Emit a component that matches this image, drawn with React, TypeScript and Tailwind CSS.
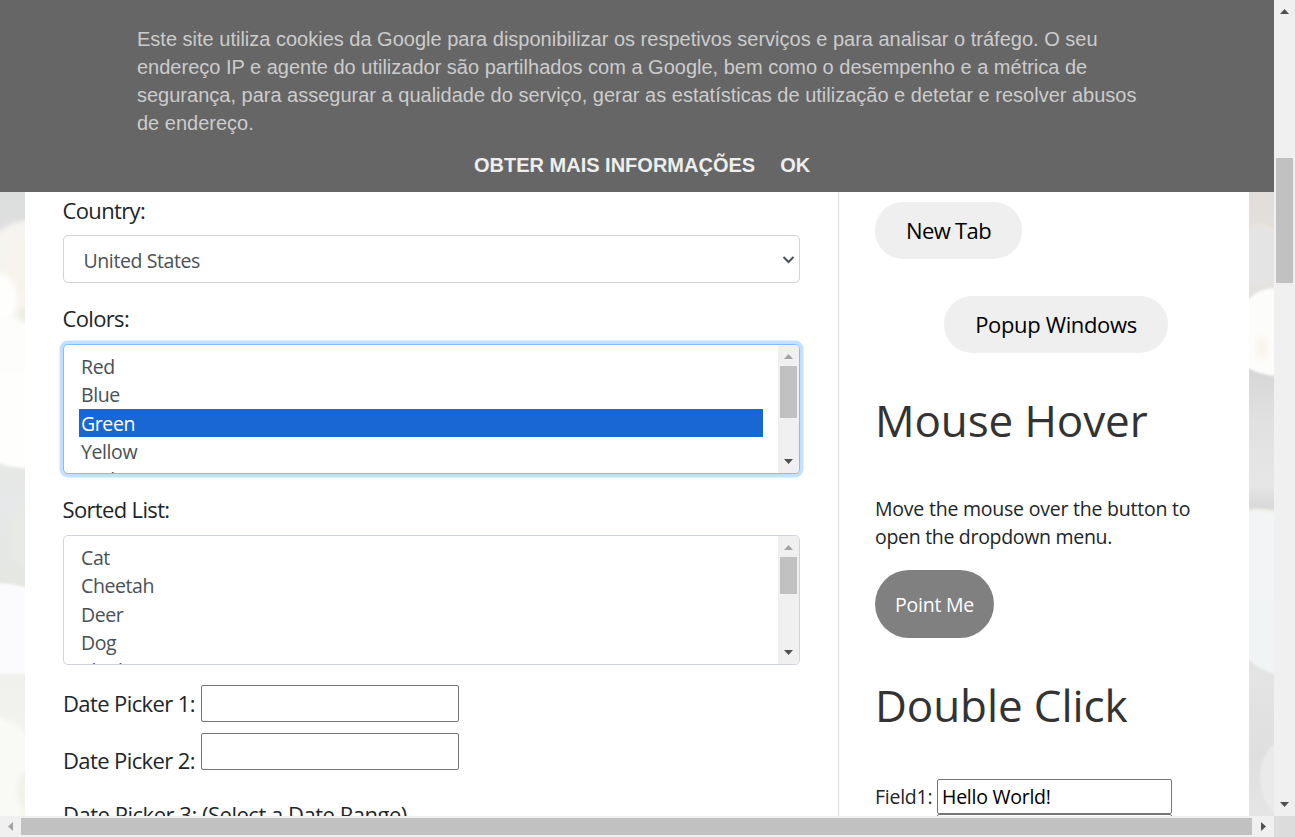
import React from "react";

type Dir = "up" | "down" | "left" | "right";

const arrowPaths: Record<Dir, string> = {
  up: "M0 8 L4.5 3 L9 8 Z",
  down: "M0 1 L9 1 L4.5 6 Z",
  left: "M7 0 L7 9 L2 4.5 Z",
  right: "M2 0 L7 4.5 L2 9 Z",
};

function Arrow({ dir, muted = false }: { dir: Dir; muted?: boolean }) {
  return (
    <span className="flex h-[21px] w-[21px] shrink-0 items-center justify-center">
      <svg width="9" height="9" viewBox="0 0 9 9" fill={muted ? "#a3a3a3" : "#505050"}>
        <path d={arrowPaths[dir]} />
      </svg>
    </span>
  );
}

function ListBox({
  options,
  selected,
  thumb,
  focused = false,
}: {
  options: string[];
  selected?: number;
  thumb: string;
  focused?: boolean;
}) {
  return (
    <div
      className={
        "flex h-[130px] w-[737px] shrink-0 overflow-hidden rounded-[5px] border bg-white " +
        (focused ? "border-[#80bdff] shadow-[0_0_0_3.5px_#c5dfff]" : "border-[#ced4da]")
      }
    >
      <ul className="flex-1 pt-[7px] pr-[15px] pl-[15px] text-[19.5px] leading-[30px] tracking-[-0.4px] text-[#495057]">
        {options.map((o, i) => (
          <li
            key={i}
            className={"h-[28.3px] pl-[2px] " + (i === selected ? "bg-[#1967d2] text-white" : "")}
          >
            {o}
          </li>
        ))}
      </ul>
      <div className="flex w-[21px] flex-col items-center justify-between bg-[#f0f0f0]">
        <div className="flex flex-col items-center">
          <Arrow dir="up" muted />
          <div className={"w-[17px] bg-[#c1c1c1] " + thumb} />
        </div>
        <Arrow dir="down" />
      </div>
    </div>
  );
}

function LeftBackdrop() {
  return (
    <svg className="h-full w-[25px] shrink-0" viewBox="0 0 25 624" preserveAspectRatio="none">
      <defs>
        <filter id="softL" x="-50%" y="-10%" width="200%" height="120%">
          <feGaussianBlur stdDeviation="2.5" />
        </filter>
        <filter id="edgeL" x="-50%" y="-10%" width="200%" height="120%">
          <feGaussianBlur stdDeviation="1.2" />
        </filter>
        <linearGradient id="baseL" x1="0" y1="0" x2="0" y2="1">
          <stop offset="0" stopColor="#dcdddd" />
          <stop offset="0.44" stopColor="#e6e8e5" />
          <stop offset="0.5" stopColor="#e7e8e9" />
          <stop offset="0.62" stopColor="#e4e7e2" />
          <stop offset="0.77" stopColor="#f0f1ed" />
          <stop offset="1" stopColor="#f5f6ef" />
        </linearGradient>
      </defs>
      <rect width="25" height="624" fill="url(#baseL)" />
      <g filter="url(#softL)">
        <ellipse cx="30" cy="110" rx="60" ry="82" fill="#f6f4ef" />
        <ellipse cx="27" cy="84" rx="24" ry="42" fill="#f9f3ed" />
        <ellipse cx="-2" cy="107" rx="19" ry="26" fill="#fefefd" />
        <path d="M-9 128 Q12 122 34 132 V274 Q12 276 -9 268 Z" fill="#fdfefc" />
        <ellipse cx="26" cy="123" rx="8" ry="8" fill="#eceee1" />
        <ellipse cx="30" cy="345" rx="20" ry="34" fill="#e7eae5" />
      </g>
      <g filter="url(#edgeL)">
        <path d="M-5 180 H30 V276 Q8 275 -5 268 Z" fill="#fefefd" />
        <path d="M-5 391 Q16 391 30 397 V482 H-5 Z" fill="#fbfbfd" />
      </g>
      <path d="M-9 524 Q18 528 30 548 V575 Q18 600 22 640 H-9 Z" fill="#f9faf5" filter="url(#softL)" />
      <ellipse cx="27" cy="598" rx="10" ry="18" fill="#f1f2ea" filter="url(#softL)" />
    </svg>
  );
}

function RightBackdrop() {
  return (
    <svg className="h-full w-[25px] shrink-0" viewBox="0 0 25 624" preserveAspectRatio="none">
      <defs>
        <filter id="softR" x="-50%" y="-10%" width="200%" height="120%">
          <feGaussianBlur stdDeviation="1.2" />
        </filter>
        <filter id="hazeR" x="-100%" y="-50%" width="300%" height="200%">
          <feGaussianBlur stdDeviation="4" />
        </filter>
        <linearGradient id="baseR" x1="0" y1="0" x2="0" y2="1">
          <stop offset="0" stopColor="#e2ddd8" />
          <stop offset="0.15" stopColor="#e5e3e0" />
          <stop offset="0.29" stopColor="#d7d7d8" />
          <stop offset="0.37" stopColor="#e1e1e2" />
          <stop offset="0.47" stopColor="#e6e6e6" />
          <stop offset="0.5" stopColor="#dadada" />
          <stop offset="0.78" stopColor="#e4e4e4" />
          <stop offset="0.9" stopColor="#dfdfdf" />
          <stop offset="1" stopColor="#e5e5e5" />
        </linearGradient>
      </defs>
      <rect width="25" height="624" fill="url(#baseR)" />
      <g filter="url(#softR)">
        <ellipse cx="8" cy="62" rx="26" ry="30" fill="#e5e4e5" />
        <path d="M8 32 Q18 32 26 40" stroke="#ebe5d8" strokeWidth="2" fill="none" />
        <path d="M-3 110 Q8 96 28 96 V184 Q10 183 -3 175 Z" fill="#fcfdfb" />
        <path d="M-3 318 Q14 316 28 320 V414 H-3 Z" fill="#f3f4f6" />
        <path d="M-3 319 Q14 317 28 321" stroke="#f1f0e7" strokeWidth="3" fill="none" />
        <path d="M-3 412 Q14 406 28 406 V482 Q10 480 -3 464 Z" fill="#f1f4f5" />
        <ellipse cx="36" cy="586" rx="25" ry="38" fill="#eaeaea" />
      </g>
      <ellipse cx="13" cy="156" rx="6" ry="12" fill="#fbf2e9" filter="url(#hazeR)" />
    </svg>
  );
}

function CookieBanner() {
  return (
    <div className="flex h-[192px] shrink-0 flex-col bg-[#666666] font-['Liberation_Sans',Arial,sans-serif]">
      <p className="ml-[137px] pt-[25px] text-[20px] leading-[28px] whitespace-nowrap text-[#cccccc]">
        Este site utiliza cookies da Google para disponibilizar os respetivos serviços e para analisar o tráfego. O seu
        <br />
        endereço IP e agente do utilizador são partilhados com a Google, bem como o desempenho e a métrica de
        <br />
        segurança, para assegurar a qualidade do serviço, gerar as estatísticas de utilização e detetar e resolver abusos
        <br />
        de endereço.
      </p>
      <div className="mt-[14px] ml-[474px] flex gap-[25px] text-[20px] leading-[28px] font-bold whitespace-nowrap text-[#eeeeee]">
        <span>OBTER MAIS INFORMAÇÕES</span>
        <span>OK</span>
      </div>
    </div>
  );
}

const labelCls = "shrink-0 text-[22px] leading-[34px] whitespace-nowrap";

function FormColumn() {
  return (
    <section className="flex w-[813px] shrink-0 flex-col pl-[38px] text-[#212529]">
      <div className={"mt-[1px] -ml-[0.5px] h-[42px] tracking-[-0.65px] " + labelCls}>Country:</div>
      <div className="flex h-[48px] w-[737px] shrink-0 items-center justify-between rounded-[5px] border border-[#ced4da] pt-[3px] pr-[4px] pl-[19.5px] text-[19.5px] tracking-[-0.4px] text-[#495057]">
        <span>United States</span>
        <svg width="13" height="9" viewBox="0 0 13 9" className="-mt-[3px]" fill="none" stroke="#495057" strokeWidth="2">
          <path d="M1.5 2 L6.5 7 L11.5 2" />
        </svg>
      </div>
      <div className={"mt-[18px] -ml-[0.5px] h-[43px] tracking-[-0.65px] " + labelCls}>Colors:</div>
      <ListBox options={["Red", "Blue", "Green", "Yellow", "Red"]} selected={2} thumb="h-[52px]" focused />
      <div className={"mt-[18px] -ml-[0.5px] h-[43px] tracking-[-0.65px] " + labelCls}>Sorted List:</div>
      <ListBox options={["Cat", "Cheetah", "Deer", "Dog", "Elephant"]} thumb="h-[37px]" />
      <div className="mt-[20px] flex h-[48px] shrink-0 items-start">
        <span className={"mt-[1px] w-[138px] tracking-[-0.6px] " + labelCls}>Date Picker 1:</span>
        <span className="h-[37px] w-[258px] rounded-[2px] border border-[#767676] bg-white" />
      </div>
      <div className="flex h-[64px] shrink-0 items-start">
        <span className={"mt-[10px] w-[138px] tracking-[-0.6px] " + labelCls}>Date Picker 2:</span>
        <span className="h-[37px] w-[258px] rounded-[2px] border border-[#767676] bg-white" />
      </div>
      <div className={"tracking-[-0.48px] " + labelCls}>Date Picker 3: (Select a Date Range)</div>
    </section>
  );
}

function SideColumn() {
  return (
    <aside className="flex flex-1 flex-col items-start border-l border-[#dddddd] pl-[36px] text-[#212529]">
      <button className="mt-[10px] h-[57px] w-[147px] shrink-0 rounded-[28px] bg-[#efefef] text-[22px] tracking-[-0.65px] text-black">
        New Tab
      </button>
      <button className="mt-[37px] ml-[69px] h-[57px] w-[224px] shrink-0 rounded-[28px] bg-[#efefef] text-[22px] tracking-[-0.35px] text-black">
        Popup Windows
      </button>
      <h2 className="mt-[37px] shrink-0 text-[44px] leading-[60px] tracking-[-0.1px] whitespace-nowrap text-[#333333]">
        Mouse Hover
      </h2>
      <p className="mt-[45px] shrink-0 text-[19.5px] leading-[28px] tracking-[-0.22px] whitespace-nowrap">
        Move the mouse over the button to
        <br />
        <span className="tracking-[-0.3px]">open the dropdown menu.</span>
      </p>
      <button className="mt-[19px] h-[68px] w-[119px] shrink-0 rounded-[34px] bg-[#808080] pt-[2px] text-[19.5px] tracking-[-0.2px] text-white">
        Point Me
      </button>
      <h2 className="mt-[37px] shrink-0 text-[44px] leading-[60px] tracking-[-0.1px] whitespace-nowrap text-[#333333]">
        Double Click
      </h2>
      <div className="mt-[44px] flex h-[35px] shrink-0 items-center text-[19.5px] tracking-[-0.25px]">
        <span className="w-[62px]">Field1:</span>
        <span className="flex h-[35px] w-[235px] items-center rounded-[2px] border border-[#767676] bg-white pl-[4px] text-black">
          Hello World!
        </span>
      </div>
      <div className="ml-[62px] h-[35px] w-[235px] shrink-0 rounded-[2px] border border-[#767676] bg-white" />
    </aside>
  );
}

export default function App() {
  return (
    <div className="flex h-[837px] w-[1295px] flex-col overflow-hidden bg-white font-['Open_Sans','Noto_Sans',sans-serif]">
      <div className="flex h-[816px] shrink-0">
        <div className="flex w-[1274px] flex-col overflow-hidden">
          <CookieBanner />
          <main className="flex h-[624px] overflow-hidden">
            <LeftBackdrop />
            <FormColumn />
            <SideColumn />
            <RightBackdrop />
          </main>
        </div>
        <div className="flex w-[21px] flex-col items-center justify-between bg-[#f0f0f0]">
          <div className="flex flex-col items-center gap-[137px]">
            <Arrow dir="up" />
            <div className="h-[125px] w-[17px] bg-[#c1c1c1]" />
          </div>
          <Arrow dir="down" />
        </div>
      </div>
      <div className="flex h-[21px] shrink-0 items-center bg-[#f0f0f0]">
        <Arrow dir="left" muted />
        <div className="mr-px h-[17px] w-[1231px] bg-[#c1c1c1]" />
        <Arrow dir="right" />
        <div className="h-[21px] flex-1 bg-[#dcdcdc]" />
      </div>
    </div>
  );
}
